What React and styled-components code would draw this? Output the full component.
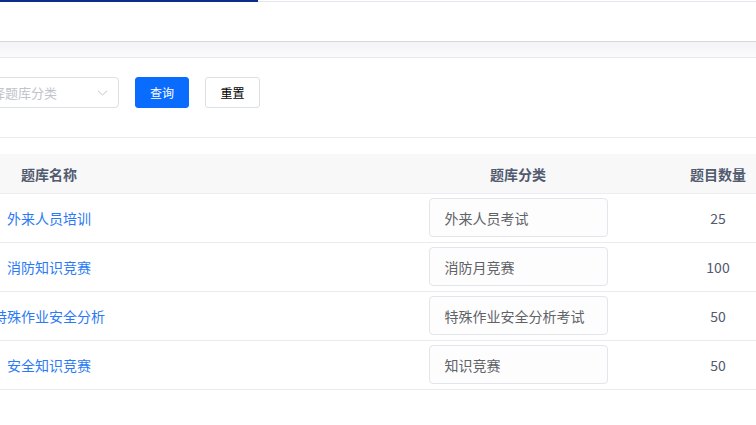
import React from "react";
import styled, { createGlobalStyle } from "styled-components";

const Global = createGlobalStyle`
  html, body { margin: 0; padding: 0; background: #fff; overflow: hidden; }
  body { font-family: "Noto Sans CJK SC", "Noto Sans", sans-serif; width: 756px; height: 425px; }
  * { box-sizing: border-box; }
`;

const Page = styled.div`
  width: 756px;
  height: 425px;
  overflow: hidden;
  display: flex;
  flex-direction: column;
`;

const TopBar = styled.div`
  height: 42px;
  flex: none;
  display: flex;
  background: #fff;
  border-bottom: 1px solid #d7d7dc;
`;

const TopAccent = styled.div`
  width: ${(p) => p.$w}px;
  flex: ${(p) => (p.$w ? "none" : "1")};
  height: 2px;
  border-top: ${(p) => (p.$dark ? "2px solid #0b2c88" : "1px solid transparent")};
  border-bottom: ${(p) => (p.$dark ? "none" : "1px solid #e2e6ee")};
`;

const Strip = styled.div`
  height: 16px;
  flex: none;
  background: linear-gradient(#f3f3f5, #fbfbfc);
  border-bottom: 1px solid #e8e9ef;
`;

const FilterBar = styled.div`
  display: flex;
  align-items: center;
  gap: 16px;
  padding: 19px 0 29px;
  margin-left: -46px;
  border-bottom: 1px solid #ebedf2;
`;

const Select = styled.div`
  width: 165px;
  height: 31px;
  border: 1px solid #dcdfe6;
  border-radius: 4px;
  display: flex;
  align-items: center;
  justify-content: space-between;
  padding: 0 10px 0 11px;
  font-size: 13px;
  color: #c0c4cc;
  background: #fff;
`;

const Button = styled.button`
  height: 31px;
  width: ${(p) => (p.$primary ? 54 : 55)}px;
  border-radius: 3px;
  border: 1px solid ${(p) => (p.$primary ? "#0a6cff" : "#dcdfe6")};
  background: ${(p) => (p.$primary ? "#0a6cff" : "#fff")};
  color: ${(p) => (p.$primary ? "#fff" : "#000")};
  font-family: "Noto Sans CJK SC", sans-serif;
  font-size: 12px;
  padding: 0;
  display: flex;
  align-items: center;
  justify-content: center;
`;

const Table = styled.div`
  margin-top: 16px;
  width: 818px;
  display: grid;
  grid-template-columns: 98px 320px 200px 200px;
`;

const HeadCell = styled.div`
  height: 40px;
  background: #f8f8f9;
  border-bottom: 1px solid #ebedf2;
  display: flex;
  align-items: center;
  justify-content: center;
  font-size: 14px;
  font-weight: 700;
  color: #515a6e;
  white-space: nowrap;
`;

const Cell = styled.div`
  height: 49px;
  border-bottom: 1px solid #e9ebf0;
  display: flex;
  align-items: center;
  justify-content: center;
  font-size: 14px;
  white-space: nowrap;
  color: ${(p) => (p.$link ? "#2a7af6" : "#515a6e")};
`;

const CategoryBox = styled.div`
  width: 179px;
  height: 39px;
  margin-top: -1px;
  border: 1px solid #e3e5eb;
  border-radius: 4px;
  background: #fdfdfe;
  display: flex;
  align-items: center;
  padding-left: 15px;
  font-size: 14px;
  color: #606266;
`;

const Chevron = () => (
  <svg width="11" height="6" viewBox="0 0 11 6">
    <path d="M1 0.8 L5.5 5 L10 0.8" fill="none" stroke="#c0c4cc" strokeWidth="1" />
  </svg>
);

const rows = [
  { name: "外来人员培训", cat: "外来人员考试", count: 25 },
  { name: "消防知识竞赛", cat: "消防月竞赛", count: 100 },
  { name: "特殊作业安全分析", cat: "特殊作业安全分析考试", count: 50 },
  { name: "安全知识竞赛", cat: "知识竞赛", count: 50 },
];

export default function App() {
  return (
    <Page>
      <Global />
      <TopBar>
        <TopAccent $w={258} $dark />
        <TopAccent />
      </TopBar>
      <Strip />
      <FilterBar>
        <Select>
          <span>请选择题库分类</span>
          <Chevron />
        </Select>
        <Button $primary>查询</Button>
        <Button>重置</Button>
      </FilterBar>
      <Table>
        <HeadCell>题库名称</HeadCell>
        <HeadCell />
        <HeadCell>题库分类</HeadCell>
        <HeadCell>题目数量</HeadCell>
        {rows.map((r) => (
          <React.Fragment key={r.name}>
            <Cell $link>{r.name}</Cell>
            <Cell />
            <Cell>
              <CategoryBox>{r.cat}</CategoryBox>
            </Cell>
            <Cell>{r.count}</Cell>
          </React.Fragment>
        ))}
      </Table>
    </Page>
  );
}
